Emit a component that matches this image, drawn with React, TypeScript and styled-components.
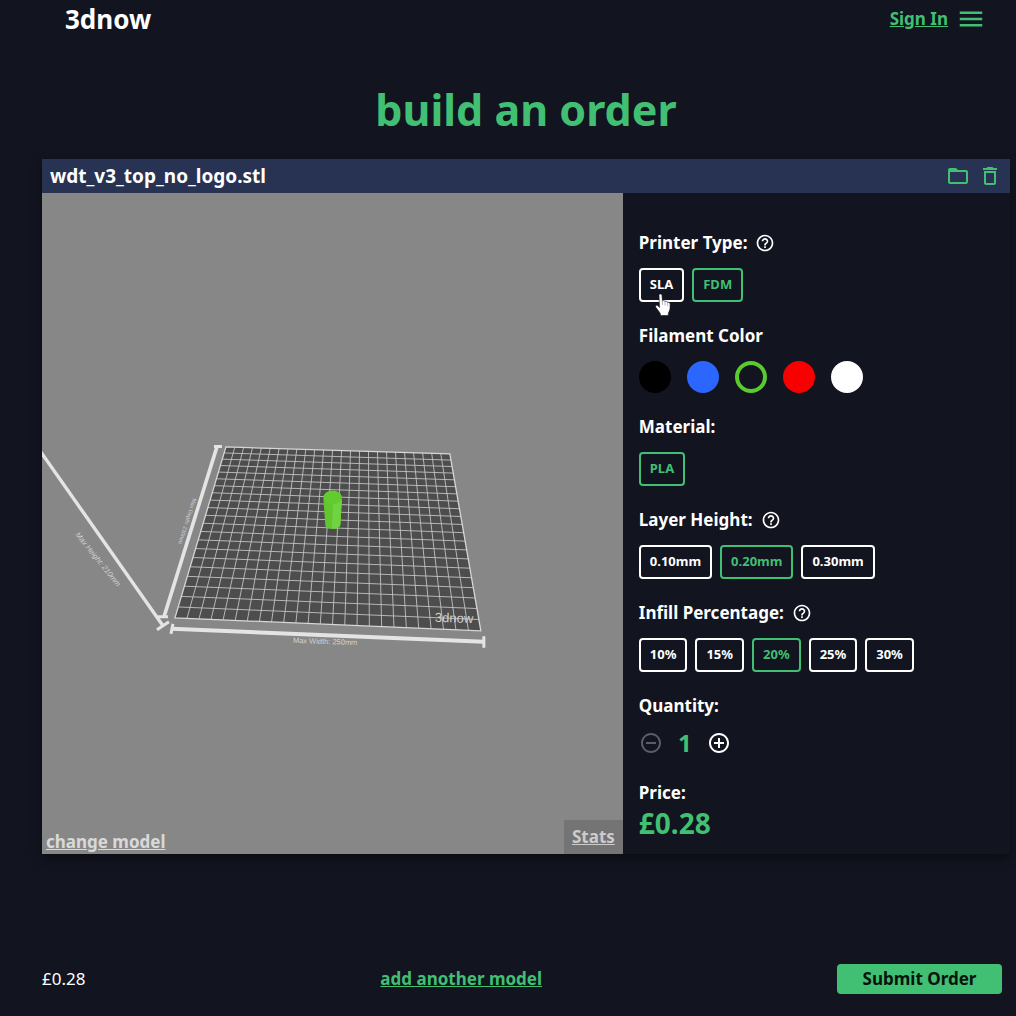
import React, { useState } from "react";
import styled, { createGlobalStyle } from "styled-components";
import {
  MdAddCircleOutline,
  MdDeleteOutline,
  MdFolderOpen,
  MdHelpOutline,
  MdMenu,
  MdRemoveCircleOutline,
} from "react-icons/md";

const color = {
  page: "#121420",
  bar: "#283252",
  green: "#41bf72",
  white: "#ffffff",
  viewer: "#878787",
  stats: "#747474",
};

const GlobalStyle = createGlobalStyle`
  *, *::before, *::after { box-sizing: border-box; }
  body {
    margin: 0;
    background: ${color.page};
    color: ${color.white};
    font-family: "Noto Sans", "Open Sans", sans-serif;
    font-size: 17px;
    line-height: 24px;
  }
  button, input { font: inherit; }
`;

const Page = styled.div`
  display: flex;
  flex-direction: column;
  min-height: 100vh;
`;

const Header = styled.header`
  display: flex;
  align-items: center;
  justify-content: space-between;
  height: 38px;
  padding: 0 30px 0 65px;
`;

const Logo = styled.a`
  color: ${color.white};
  font-size: 26px;
  font-weight: 700;
  text-decoration: none;
`;

const Nav = styled.nav`
  display: flex;
  align-items: center;
  gap: 8px;
`;

const TextLink = styled.a<{ $tone?: string }>`
  color: ${(p) => p.$tone ?? color.green};
  font-weight: 700;
  text-decoration: underline;
`;

const IconButton = styled.button<{ $tone?: string }>`
  display: flex;
  padding: 0;
  border: 0;
  background: none;
  color: ${(p) => p.$tone ?? color.green};
  cursor: pointer;

  &:disabled {
    color: #5a5c66;
    cursor: default;
  }
`;

const Main = styled.main`
  padding: 0 6px 0 42px;
`;

const Title = styled.h1`
  margin: 42px 0 19px;
  color: ${color.green};
  font-size: 43px;
  line-height: 60px;
  font-weight: 700;
  text-align: center;
`;

const Card = styled.section`
  box-shadow: 0 4px 10px rgba(0, 0, 0, 0.45);
`;

const CardBar = styled.div`
  display: flex;
  align-items: center;
  justify-content: space-between;
  height: 34px;
  padding: 0 8px;
  background: ${color.bar};
`;

const FileName = styled.h2`
  margin: 0;
  font-size: 19px;
  font-weight: 700;
`;

const BarActions = styled.div`
  display: flex;
  gap: 8px;
`;

const CardBody = styled.div`
  display: grid;
  grid-template-columns: 3fr 2fr;
`;

const Viewer = styled.div`
  display: flex;
  flex-direction: column;
  min-width: 0;
  background: ${color.viewer};
`;

const Scene = styled.svg`
  display: block;
  width: 100%;
  flex: 1;
  min-height: 0;
`;

const ViewerFooter = styled.div`
  display: flex;
  align-items: flex-end;
  justify-content: space-between;
  height: 34px;
  padding-left: 4px;
`;

const StatsBox = styled.div`
  height: 34px;
  padding: 5px 8px;
  background: ${color.stats};
`;

const Settings = styled.form`
  display: flex;
  flex-direction: column;
  gap: 22px;
  padding: 38px 16px 12px;
`;

const Group = styled.fieldset`
  min-width: 0;
  margin: 0;
  padding: 0;
  border: 0;
`;

const GroupLabel = styled.legend`
  display: flex;
  align-items: center;
  gap: 8px;
  margin-bottom: 13px;
  padding: 0;
  font-weight: 700;
`;

const Options = styled.div`
  display: flex;
  flex-wrap: wrap;
  gap: 8px;
`;

const Option = styled.button<{ $selected: boolean }>`
  position: relative;
  height: 34px;
  padding: 0 9px 2px;
  border: 2px solid currentColor;
  border-radius: 4px;
  background: transparent;
  color: ${(p) => (p.$selected ? color.green : color.white)};
  font-size: 13px;
  line-height: 20px;
  font-weight: 700;
  cursor: pointer;
`;

const Pointer = styled.svg`
  position: absolute;
  top: 23px;
  left: 13px;
  width: 18px;
  height: 24px;
  z-index: 1;
  pointer-events: none;
`;

const Swatches = styled.div`
  display: flex;
  gap: 16px;
`;

const Swatch = styled.input<{ $fill: string }>`
  appearance: none;
  width: 32px;
  height: 32px;
  margin: 0;
  border: 4px solid ${(p) => p.$fill};
  border-radius: 50%;
  background: ${(p) => p.$fill};
  cursor: pointer;

  &:checked {
    background: transparent;
  }
`;

const Stepper = styled.div`
  display: flex;
  align-items: center;
`;

const Count = styled.output`
  width: 44px;
  color: ${color.green};
  font-size: 24px;
  font-weight: 700;
  text-align: center;
`;

const Price = styled.div`
  padding-top: 4px;
  font-weight: 700;
`;

const PriceValue = styled.div`
  color: ${color.green};
  font-size: 28px;
  line-height: 36px;
`;

const Footer = styled.footer`
  display: flex;
  align-items: center;
  justify-content: space-between;
  margin-top: auto;
  padding: 20px 14px 22px 42px;
`;

const Submit = styled.button`
  width: 165px;
  height: 30px;
  padding: 0;
  border: 0;
  border-radius: 4px;
  background: ${color.green};
  color: #07130c;
  font-weight: 700;
  cursor: pointer;
`;

type Point = [number, number];

/* Corners of the print bed inside the scene, clockwise from the far left. */
const bed: Point[] = [
  [184, 254],
  [408, 261],
  [439, 438],
  [133, 425],
];

/* Projects a unit-square position onto the bed with perspective. */
function project(u: number, v: number): Point {
  const [[x0, y0], [x1, y1], [x2, y2], [x3, y3]] = bed;
  const dx1 = x1 - x2;
  const dx2 = x3 - x2;
  const sx = x0 - x1 + x2 - x3;
  const dy1 = y1 - y2;
  const dy2 = y3 - y2;
  const sy = y0 - y1 + y2 - y3;
  const det = dx1 * dy2 - dx2 * dy1;
  const g = (sx * dy2 - dx2 * sy) / det;
  const h = (dx1 * sy - sx * dy1) / det;
  const w = g * u + h * v + 1;
  return [
    ((x1 - x0 + g * x1) * u + (x3 - x0 + h * x3) * v + x0) / w,
    ((y1 - y0 + g * y1) * u + (y3 - y0 + h * y3) * v + y0) / w,
  ];
}

function segment(a: Point, b: Point) {
  return `M${a[0].toFixed(2)} ${a[1].toFixed(2)}L${b[0].toFixed(2)} ${b[1].toFixed(2)}`;
}

const COLUMNS = 25;
const ROWS = 21;
const gridPath = [
  ...Array.from({ length: COLUMNS - 1 }, (_, i) =>
    segment(project((i + 1) / COLUMNS, 0), project((i + 1) / COLUMNS, 1)),
  ),
  ...Array.from({ length: ROWS - 1 }, (_, i) =>
    segment(project(0, (i + 1) / ROWS), project(1, (i + 1) / ROWS)),
  ),
].join("");

function PrintBed() {
  return (
    <Scene viewBox="0 0 581 627" preserveAspectRatio="xMidYMid slice" role="img" aria-label="Model preview">
      <polygon points={bed.map((p) => p.join(",")).join(" ")} fill="#4d4d4e" />
      <path d={gridPath} stroke="#c2c2c2" strokeWidth="0.9" fill="none" />
      <polygon points={bed.map((p) => p.join(",")).join(" ")} fill="none" stroke="#d6d6d6" strokeWidth="1.3" />
      <g stroke="#e4e4e4" fill="none">
        <path d="M-4 255L121 433" strokeWidth="3.4" />
        <path d="M115 437L127 429" strokeWidth="3" />
        <path d="M175 254L122 424" strokeWidth="3.6" />
        <path d="M172 253.500L180 253.500M116 424H126" strokeWidth="3" />
        <path d="M130 436L442 449" strokeWidth="4" />
        <path d="M131 431L129 441M442 443.500V455" strokeWidth="3" />
      </g>
      <g fill="#d2d2d2" fontFamily="Liberation Sans, sans-serif" fontSize="7.5">
        <text transform="translate(251 450) rotate(2)">Max Width: 250mm</text>
        <text transform="translate(33 342) rotate(51)" fontStyle="italic">
          Max Height: 210mm
        </text>
        <text transform="translate(151 305) rotate(108)" fontSize="5.5">
          Max Depth: 210mm
        </text>
      </g>
      <text
        transform="translate(393 429) rotate(2)"
        fill="#d2d2d2"
        fontFamily="Liberation Sans, sans-serif"
        fontSize="13"
      >
        3dnow
      </text>
      <path d="M281.500 306L283.500 333Q285 336 291 336Q297 336 298.500 332L300 306Z" fill="#61c630" />
      <path d="M291 310L290 336Q297 336 298.500 332L300 306Z" fill="#71d33f" />
      <ellipse cx="290.700" cy="304.500" rx="9.200" ry="7" fill="#62cb2e" />
    </Scene>
  );
}

function HandPointer() {
  return (
    <Pointer viewBox="0 0 18 24" aria-hidden="true">
      <path
        d="M5 2.500C5 .6 7.800 .6 8 2.500L8.400 8C9 7.200 10.800 7.400 11 8.600C11.800 7.900 13.400 8.200 13.600 9.500C14.600 8.900 16 9.500 16.100 11L16 16L14.300 20.500V22.500H6.700L6 20L2 14.500C.8 12.400 3 11.400 4.200 13L5.500 14.500Z"
        fill="#fff"
        stroke="#121420"
        strokeWidth="0.6"
      />
      <path d="M8.400 8V12M11 9V12.500M13.600 10V13" stroke="#9a9ca5" strokeWidth="0.7" fill="none" />
    </Pointer>
  );
}

type ChoiceProps = {
  label: string;
  help?: boolean;
  options: string[];
  initial: string;
  pointed?: string;
};

function Choice({ label, help, options, initial, pointed }: ChoiceProps) {
  const [value, setValue] = useState(initial);
  return (
    <Group>
      <GroupLabel>
        {label}
        {help && (
          <IconButton type="button" $tone={color.white} aria-label={`About ${label}`}>
            <MdHelpOutline size={20} />
          </IconButton>
        )}
      </GroupLabel>
      <Options>
        {options.map((o) => (
          <Option key={o} type="button" $selected={o === value} aria-pressed={o === value} onClick={() => setValue(o)}>
            {o}
            {o === pointed && <HandPointer />}
          </Option>
        ))}
      </Options>
    </Group>
  );
}

const filaments = [
  { name: "Black", fill: "#000000" },
  { name: "Blue", fill: "#2b66ff" },
  { name: "Green", fill: "#5acb2c" },
  { name: "Red", fill: "#f80000" },
  { name: "White", fill: "#ffffff" },
];

export default function App() {
  const [filament, setFilament] = useState("Green");
  const [quantity, setQuantity] = useState(1);
  const total = `£${(0.28 * quantity).toFixed(2)}`;

  return (
    <>
      <GlobalStyle />
      <Page>
        <Header>
          <Logo href="#">3dnow</Logo>
          <Nav>
            <TextLink href="#">Sign In</TextLink>
            <IconButton type="button" aria-label="Menu">
              <MdMenu size={30} />
            </IconButton>
          </Nav>
        </Header>

        <Main>
          <Title>build an order</Title>
          <Card>
            <CardBar>
              <FileName>wdt_v3_top_no_logo.stl</FileName>
              <BarActions>
                <IconButton type="button" aria-label="Open file">
                  <MdFolderOpen size={24} />
                </IconButton>
                <IconButton type="button" aria-label="Delete model">
                  <MdDeleteOutline size={24} />
                </IconButton>
              </BarActions>
            </CardBar>
            <CardBody>
              <Viewer>
                <PrintBed />
                <ViewerFooter>
                  <TextLink href="#" $tone="#d9d9d9">change model</TextLink>
                  <StatsBox>
                    <TextLink href="#" $tone="#cccccc">Stats</TextLink>
                  </StatsBox>
                </ViewerFooter>
              </Viewer>

              <Settings>
                <Choice label="Printer Type:" help options={["SLA", "FDM"]} initial="FDM" pointed="SLA" />
                <Group>
                  <GroupLabel>Filament Color</GroupLabel>
                  <Swatches>
                    {filaments.map((f) => (
                      <Swatch
                        key={f.name}
                        type="radio"
                        name="filament"
                        aria-label={f.name}
                        $fill={f.fill}
                        checked={filament === f.name}
                        onChange={() => setFilament(f.name)}
                      />
                    ))}
                  </Swatches>
                </Group>
                <Choice label="Material:" options={["PLA"]} initial="PLA" />
                <Choice label="Layer Height:" help options={["0.10mm", "0.20mm", "0.30mm"]} initial="0.20mm" />
                <Choice
                  label="Infill Percentage:"
                  help
                  options={["10%", "15%", "20%", "25%", "30%"]}
                  initial="20%"
                />
                <Group>
                  <GroupLabel>Quantity:</GroupLabel>
                  <Stepper>
                    <IconButton
                      type="button"
                      aria-label="Decrease quantity"
                      disabled={quantity === 1}
                      onClick={() => setQuantity(quantity - 1)}
                    >
                      <MdRemoveCircleOutline size={24} />
                    </IconButton>
                    <Count>{quantity}</Count>
                    <IconButton
                      type="button"
                      $tone={color.white}
                      aria-label="Increase quantity"
                      onClick={() => setQuantity(quantity + 1)}
                    >
                      <MdAddCircleOutline size={24} />
                    </IconButton>
                  </Stepper>
                </Group>
                <Price>
                  Price:
                  <PriceValue>{total}</PriceValue>
                </Price>
              </Settings>
            </CardBody>
          </Card>
        </Main>

        <Footer>
          <span>{total}</span>
          <TextLink href="#">add another model</TextLink>
          <Submit type="button">Submit Order</Submit>
        </Footer>
      </Page>
    </>
  );
}
